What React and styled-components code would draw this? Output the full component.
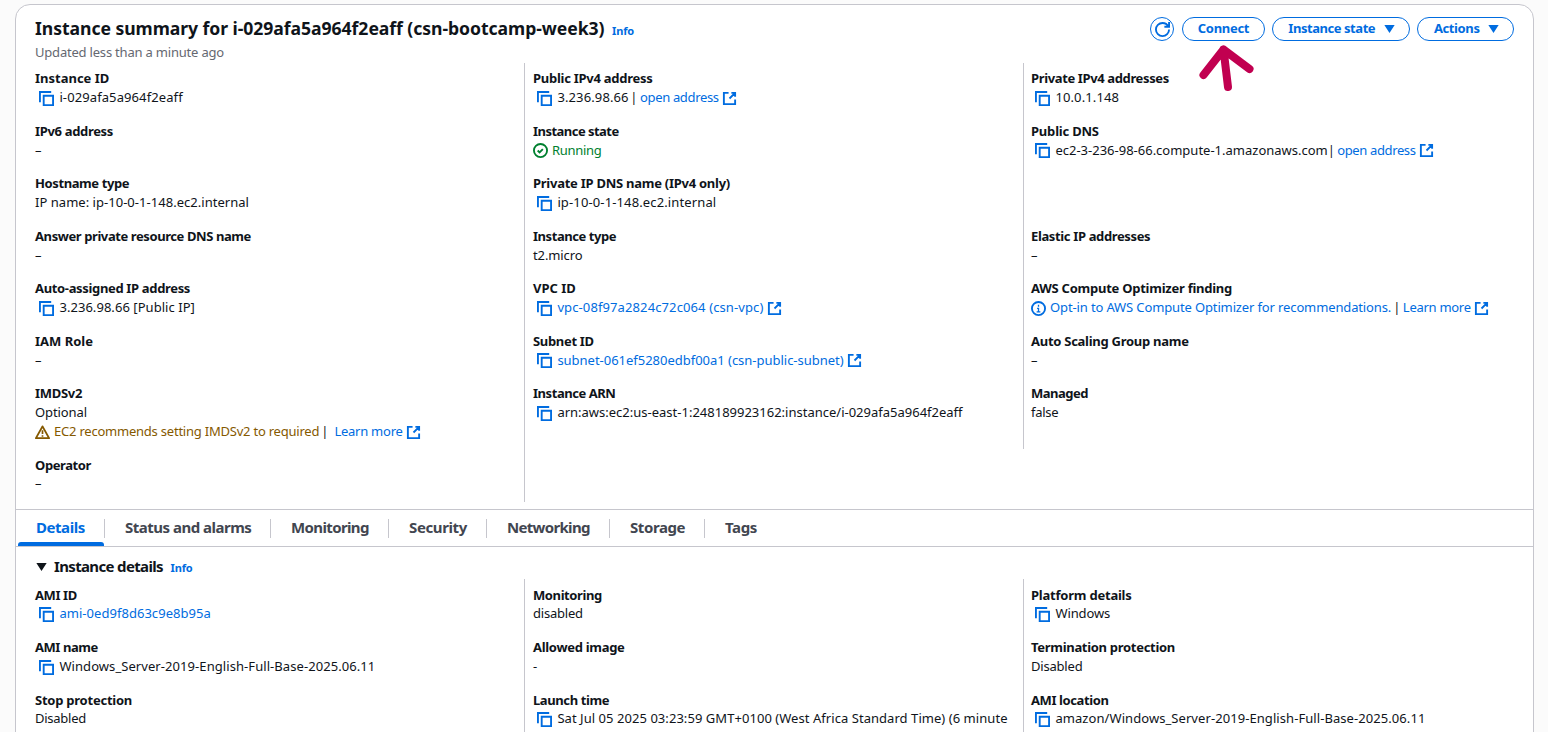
import React from "react";
import styled, { createGlobalStyle } from "styled-components";

const BLUE = "#006ce0";
const LINE = "#c6c6cd";

const Global = createGlobalStyle`
  html, body { margin: 0; height: 732px; overflow: hidden; background: #fbfbfb; }
  body { font: 13px/18.75px "Noto Sans", "Open Sans", sans-serif; color: #0f141a; }
  *, *::before, *::after { box-sizing: border-box; }
`;
const Page = styled.div`
  position: relative;
  height: 732px;
  padding: 4px 14px 0 15px;
  overflow: hidden;
`;
const Panel = styled.main`
  height: 760px;
  border: 1px solid ${LINE};
  border-radius: 15px;
  background: #fff;
`;
const Header = styled.header`
  display: flex;
  justify-content: space-between;
  padding: 12px 19px 0;
  height: 58px;
`;
const Heading = styled.h1`
  margin: 0;
  font-size: 17.6px;
  line-height: 23px;
  font-weight: 700;
  white-space: nowrap;
  letter-spacing: -0.055px;
`;
const Info = styled.a`
  font-size: 11px;
  font-weight: 700;
  letter-spacing: -0.1px;
  color: ${BLUE};
  margin-left: 7.5px;
`;
const Updated = styled.div`
  margin-top: 1px;
  color: #656871;
  letter-spacing: -0.2px;
`;
const Actions = styled.div`
  display: flex;
  gap: 7px;
  height: 24px;
`;
const Button = styled.button`
  display: flex;
  align-items: center;
  justify-content: center;
  gap: 6.5px;
  width: ${(p) => p.$w}px;
  height: 24px;
  padding: 0 0 ${(p) => (p.$round ? 0 : 2)}px ${(p) => p.$shift || 0}px;
  margin-right: ${(p) => (p.$round ? 1 : 0)}px;
  border: 1px solid ${BLUE};
  border-radius: 12px;
  background: #fff;
  color: ${BLUE};
  font: 700 13px/18px "Noto Sans", sans-serif;
  letter-spacing: ${(p) => p.$ls || 0}px;
  white-space: nowrap;
`;
const Columns = styled.section`
  display: flex;
  align-items: flex-start;
  height: ${(p) => p.$h}px;
`;
const Column = styled.div`
  display: flex;
  flex-direction: column;
  gap: 15px;
  width: ${(p) => p.$w}px;
  height: ${(p) => p.$h}px;
  padding: ${(p) => p.$top || 6.3}px 0 0 ${(p) => p.$pad}px;
  border-left: ${(p) => (p.$first ? "0" : `1px solid ${LINE}`)};
`;
const Pair = styled.div`
  min-height: 37.5px;
`;
const Label = styled.div`
  height: 18.75px;
  font-weight: 700;
  white-space: nowrap;
  letter-spacing: ${(p) => p.$ls || 0}px;
`;
const Value = styled.div`
  display: flex;
  align-items: center;
  height: 18.75px;
  white-space: nowrap;
`;
const Text = styled.span`
  color: ${(p) => p.$c || "inherit"};
  letter-spacing: ${(p) => p.$ls || 0}px;
`;
const Link = styled.a`
  color: ${BLUE};
  letter-spacing: ${(p) => p.$ls || 0}px;
`;
const Bar = styled.span`
  margin: 0 ${(p) => p.$r ?? 3}px 0 ${(p) => p.$l ?? 2}px;
`;
const Svg = styled.svg`
  flex: none;
  width: 15px;
  height: 15px;
  margin: ${(p) => p.$t ?? 2}px ${(p) => p.$r || 0}px 0 ${(p) => p.$l || 0}px;
  fill: none;
  stroke: ${(p) => p.$c || BLUE};
  stroke-width: 2;
`;
const Caret = styled.svg`
  flex: none;
  width: 15px;
  height: 15px;
  margin-top: 1px;
  fill: currentColor;
`;
const Tabs = styled.nav`
  display: flex;
  height: 38px;
  border-top: 1px solid ${LINE};
  border-bottom: 1px solid ${LINE};
`;
const Tab = styled.a`
  position: relative;
  width: ${(p) => p.$w}px;
  height: 36px;
  padding-left: 20px;
  font-size: 15px;
  line-height: 34px;
  font-weight: 700;
  white-space: nowrap;
  letter-spacing: ${(p) => p.$ls || 0}px;
  color: ${(p) => (p.$active ? BLUE : "#424650")};
  &::before {
    content: "";
    position: absolute;
    right: 0;
    top: 9px;
    height: 19px;
    border-right: ${(p) => (p.$last ? "0" : `1px solid ${LINE}`)};
  }
  &::after {
    content: "";
    display: ${(p) => (p.$active ? "block" : "none")};
    position: absolute;
    left: 2px;
    right: 1px;
    bottom: 0;
    height: 4px;
    border-radius: 3px 3px 0 0;
    background: ${BLUE};
  }
`;
const SectionHead = styled.h2`
  display: flex;
  align-items: baseline;
  height: 32px;
  margin: 0;
  padding: 8px 18px 0;
  font-size: 15px;
  line-height: 22px;
  ${Caret} {
    align-self: flex-start;
    margin-top: 4px;
  }
`;
const SectionTitle = styled.span`
  margin-left: 5px;
  letter-spacing: -0.65px;
`;
const Pointer = styled.svg`
  position: absolute;
  left: 1190px;
  top: 40px;
  width: 70px;
  height: 56px;
  fill: none;
  stroke: #c10050;
  stroke-width: 8;
  stroke-linecap: round;
  stroke-linejoin: round;
`;

const Copy = () => (
  <Svg viewBox="0 0 16 16" $l={4} $r={5.4}>
    <path d="M15 5H5v10h10V5ZM13 1H1v11" />
  </Svg>
);
const External = ({ gap = 3.3 }) => (
  <Svg viewBox="0 0 16 16" $l={gap}>
    <path d="M10 2h4v4M8 8l6-6M14 9v5H2V2h5" />
  </Svg>
);
const Good = () => (
  <Svg viewBox="0 0 16 16" $c="#00802f" $r={4}>
    <circle cx="8" cy="8" r="7" />
    <path d="m5 8 2 2 3.5-3.5" />
  </Svg>
);
const InfoIcon = () => (
  <Svg viewBox="0 0 16 16" $r={4}>
    <circle cx="8" cy="8" r="7" />
    <path d="M8 4v2M6.5 7.8H8V11M6 11.5h4" strokeWidth="1.4" />
  </Svg>
);
const Warning = () => (
  <Svg viewBox="0 0 16 16" $c="#855900" $r={4} strokeLinejoin="round">
    <path d="M8 1.5 15 14H1L8 1.5Z" />
    <path d="M8 5.5v4M8 10.8v1.8" strokeWidth="1.8" />
  </Svg>
);
const Down = () => (
  <Caret viewBox="0 0 16 16">
    <path d="M2.5 4.3h11L8 12.7Z" />
  </Caret>
);

const Field = ({ label, ls, children, extra }) => (
  <Pair>
    <Label $ls={ls}>{label}</Label>
    <Value>{children}</Value>
    {extra && <Value>{extra}</Value>}
  </Pair>
);

export default function App() {
  return (
    <Page>
      <Global />
      <Panel>
        <Header>
          <div>
            <Heading>
              Instance summary for i-029afa5a964f2eaff (csn-bootcamp-week3)
              <Info>Info</Info>
            </Heading>
            <Updated>Updated less than a minute ago</Updated>
          </div>
          <Actions>
            <Button $round $w={24} aria-label="Refresh">
              <Svg viewBox="0 0 16 16" $t={0}>
                <path d="M15 8c0 3.87-3.13 7-7 7s-7-3.13-7-7 3.13-7 7-7c2.79 0 5.2 1.63 6.33 4M10 5h5V0" />
              </Svg>
            </Button>
            <Button $w={83} $ls={-0.3}>Connect</Button>
            <Button $w={138} $ls={-0.45} $shift={3}>Instance state <Down /></Button>
            <Button $w={97} $ls={-0.4} $shift={4}>Actions <Down /></Button>
          </Actions>
        </Header>

        <Columns $h={446}>
          <Column $first $pad={19} $w={508}>
            <Field label="Instance ID"><Copy /><Text $ls={0.1}>i-029afa5a964f2eaff</Text></Field>
            <Field label="IPv6 address" ls={-0.33}>–</Field>
            <Field label="Hostname type" ls={-0.4}><Text $ls={0.03}>IP name: ip-10-0-1-148.ec2.internal</Text></Field>
            <Field label="Answer private resource DNS name" ls={-0.41}>–</Field>
            <Field label="Auto-assigned IP address" ls={-0.34}><Copy /><Text $ls={0.05}>3.236.98.66 [Public IP]</Text></Field>
            <Field label="IAM Role">–</Field>
            <Field
              label="IMDSv2"
              ls={-0.3}
              extra={<><Warning /><Text $c="#855900" $ls={-0.22}>EC2 recommends setting IMDSv2 to required</Text><Bar $r={6}>|</Bar><Link $ls={-0.25}>Learn more</Link><External /></>}
            >
              <Text $ls={-0.1}>Optional</Text>
            </Field>
            <Field label="Operator" ls={-0.4}>–</Field>
          </Column>
          <Column $pad={8} $w={499} $h={439}>
            <Field label="Public IPv4 address" ls={-0.27}><Copy /><Text $ls={0.12}>3.236.98.66</Text><Bar $l={1.6} $r={2.6}>|</Bar><Link $ls={-0.34}>open address</Link><External gap={3.6} /></Field>
            <Field label="Instance state" ls={-0.53}><Good /><Text $c="#00802f" $ls={-0.3}>Running</Text></Field>
            <Field label="Private IP DNS name (IPv4 only)" ls={-0.26}><Copy /><Text $ls={0.13}>ip-10-0-1-148.ec2.internal</Text></Field>
            <Field label="Instance type" ls={-0.45}><Text $ls={-0.1}>t2.micro</Text></Field>
            <Field label="VPC ID"><Copy /><Link $ls={0.11}>vpc-08f97a2824c72c064 (csn-vpc)</Link><External gap={3.8} /></Field>
            <Field label="Subnet ID" ls={-0.33}><Copy /><Link $ls={-0.02}>subnet-061ef5280edbf00a1 (csn-public-subnet)</Link><External /></Field>
            <Field label="Instance ARN" ls={-0.45}><Copy /><Text>arn:aws:ec2:us-east-1:248189923162:instance/i-029afa5a964f2eaff</Text></Field>
          </Column>
          <Column $pad={7} $w={509} $h={386}>
            <Field label="Private IPv4 addresses" ls={-0.37}><Copy /><Text $ls={0.12}>10.0.1.148</Text></Field>
            <Field label="Public DNS" ls={-0.2}><Copy /><Text $ls={0}>ec2-3-236-98-66.compute-1.amazonaws.com</Text><Bar $l={0} $r={2.2}>|</Bar><Link $ls={-0.36}>open address</Link><External gap={3.6} /></Field>
            <Pair />
            <Field label="Elastic IP addresses" ls={-0.36}>–</Field>
            <Field label="AWS Compute Optimizer finding" ls={-0.25}><InfoIcon /><Link $ls={-0.13}>Opt-in to AWS Compute Optimizer for recommendations.</Link><Bar $r={2.5}>|</Bar><Link $ls={-0.28}>Learn more</Link><External gap={3.6} /></Field>
            <Field label="Auto Scaling Group name" ls={-0.27}>–</Field>
            <Field label="Managed" ls={-0.5}><Text $ls={-0.25}>false</Text></Field>
          </Column>
        </Columns>

        <Tabs>
          <Tab $active $w={89} $ls={-0.45}>Details</Tab>
          <Tab $w={166} $ls={-0.5}>Status and alarms</Tab>
          <Tab $w={118} $ls={-0.62}>Monitoring</Tab>
          <Tab $w={98} $ls={-0.38}>Security</Tab>
          <Tab $w={123} $ls={-0.68}>Networking</Tab>
          <Tab $w={95} $ls={-0.42}>Storage</Tab>
          <Tab $last $w={80} $ls={-0.4}>Tags</Tab>
        </Tabs>

        <SectionHead>
          <Down />
          <SectionTitle>Instance details</SectionTitle>
          <Info>Info</Info>
        </SectionHead>
        <Columns $h={180}>
          <Column $first $pad={19} $top={6.6} $w={508} $h={180}>
            <Field label="AMI ID" ls={-0.4}><Copy /><Link $ls={0.04}>ami-0ed9f8d63c9e8b95a</Link></Field>
            <Field label="AMI name" ls={-0.45}><Copy /><Text $ls={0.07}>Windows_Server-2019-English-Full-Base-2025.06.11</Text></Field>
            <Field label="Stop protection" ls={-0.24}><Text $ls={-0.25}>Disabled</Text></Field>
          </Column>
          <Column $pad={8} $top={6.6} $w={499} $h={180}>
            <Field label="Monitoring" ls={-0.4}><Text $ls={-0.22}>disabled</Text></Field>
            <Field label="Allowed image" ls={-0.3}>-</Field>
            <Field label="Launch time" ls={-0.4} extra="s)"><Copy /><Text $ls={0.05}>Sat Jul 05 2025 03:23:59 GMT+0100 (West Africa Standard Time) (6 minute</Text></Field>
          </Column>
          <Column $pad={7} $top={6.6} $w={509} $h={180}>
            <Field label="Platform details" ls={-0.22}><Copy /><Text $ls={-0.1}>Windows</Text></Field>
            <Field label="Termination protection" ls={-0.3}><Text $ls={-0.2}>Disabled</Text></Field>
            <Field label="AMI location" ls={-0.4}><Copy /><Text $ls={0.07}>amazon/Windows_Server-2019-English-Full-Base-2025.06.11</Text></Field>
          </Column>
        </Columns>
      </Panel>
      <Pointer viewBox="0 0 70 56">
        <path d="M13.5 35 33.5 9.5 59.5 29M33.5 9.5 38 47" />
      </Pointer>
    </Page>
  );
}
